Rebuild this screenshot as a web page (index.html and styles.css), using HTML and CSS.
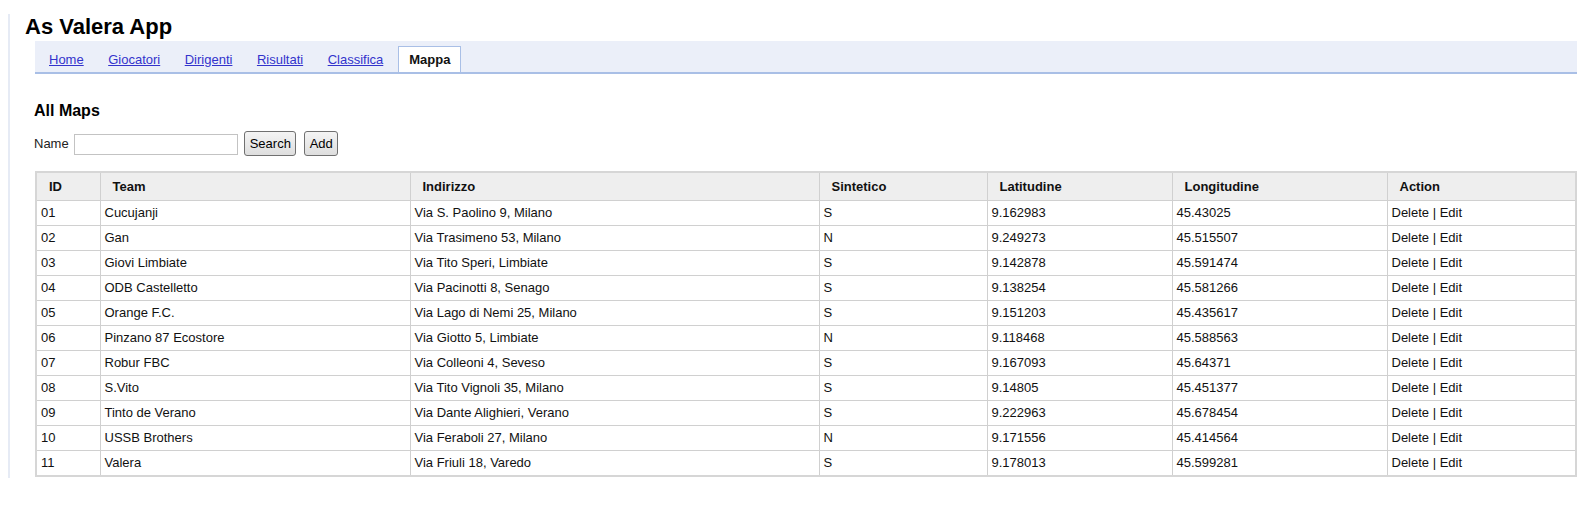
FILE: index.html
```html
<!DOCTYPE html>
<html lang="it">
<head>
<meta charset="utf-8">
<title>As Valera App</title>
<link rel="stylesheet" href="styles.css">
</head>
<body>
<div class="page">
  <h1 class="app-title">As Valera App</h1>
  <div class="content">
    <ul class="tabs">
      <li class="tab"><a href="#">Home</a></li>
      <li class="tab"><a href="#">Giocatori</a></li>
      <li class="tab"><a href="#">Dirigenti</a></li>
      <li class="tab"><a href="#">Risultati</a></li>
      <li class="tab"><a href="#">Classifica</a></li>
      <li class="tab active"><span>Mappa</span></li>
    </ul>
    <h2 class="section-title">All Maps</h2>
    <form class="search-form">
      <label class="search-label" for="name">Name</label>
      <input class="search-input" id="name" type="text">
      <button class="btn btn-search" type="button">Search</button>
      <button class="btn btn-add" type="button">Add</button>
    </form>
    <table class="maps">
      <colgroup>
        <col class="c-id"><col class="c-team"><col class="c-addr"><col class="c-sint"><col class="c-lat"><col class="c-lon"><col class="c-act">
      </colgroup>
      <thead>
        <tr><th>ID</th><th>Team</th><th>Indirizzo</th><th>Sintetico</th><th>Latitudine</th><th>Longitudine</th><th>Action</th></tr>
      </thead>
      <tbody>
        <tr><td>01</td><td>Cucujanji</td><td>Via S. Paolino 9, Milano</td><td>S</td><td>9.162983</td><td>45.43025</td><td>Delete | Edit</td></tr>
        <tr><td>02</td><td>Gan</td><td>Via Trasimeno 53, Milano</td><td>N</td><td>9.249273</td><td>45.515507</td><td>Delete | Edit</td></tr>
        <tr><td>03</td><td>Giovi Limbiate</td><td>Via Tito Speri, Limbiate</td><td>S</td><td>9.142878</td><td>45.591474</td><td>Delete | Edit</td></tr>
        <tr><td>04</td><td>ODB Castelletto</td><td>Via Pacinotti 8, Senago</td><td>S</td><td>9.138254</td><td>45.581266</td><td>Delete | Edit</td></tr>
        <tr><td>05</td><td>Orange F.C.</td><td>Via Lago di Nemi 25, Milano</td><td>S</td><td>9.151203</td><td>45.435617</td><td>Delete | Edit</td></tr>
        <tr><td>06</td><td>Pinzano 87 Ecostore</td><td>Via Giotto 5, Limbiate</td><td>N</td><td>9.118468</td><td>45.588563</td><td>Delete | Edit</td></tr>
        <tr><td>07</td><td>Robur FBC</td><td>Via Colleoni 4, Seveso</td><td>S</td><td>9.167093</td><td>45.64371</td><td>Delete | Edit</td></tr>
        <tr><td>08</td><td>S.Vito</td><td>Via Tito Vignoli 35, Milano</td><td>S</td><td>9.14805</td><td>45.451377</td><td>Delete | Edit</td></tr>
        <tr><td>09</td><td>Tinto de Verano</td><td>Via Dante Alighieri, Verano</td><td>S</td><td>9.222963</td><td>45.678454</td><td>Delete | Edit</td></tr>
        <tr><td>10</td><td>USSB Brothers</td><td>Via Feraboli 27, Milano</td><td>N</td><td>9.171556</td><td>45.414564</td><td>Delete | Edit</td></tr>
        <tr><td>11</td><td>Valera</td><td>Via Friuli 18, Varedo</td><td>S</td><td>9.178013</td><td>45.599281</td><td>Delete | Edit</td></tr>
      </tbody>
    </table>
  </div>
</div>
</body>
</html>
```
FILE: styles.css
```css
html, body {
  background: #ffffff;
}
body {
  margin: 0 8px;
  font-family: "Liberation Sans", Arial, sans-serif;
  font-size: 13px;
  color: #222222;
}
.page {
  border-left: 2px solid #e6ebf5;
  padding-left: 15px;
  padding-bottom: 1px;
}
.app-title {
  margin: 14px 0 1px 0;
  font-size: 22px;
  line-height: 26px;
  font-weight: bold;
  color: #000000;
}
.content {
  margin-left: 10px;
}
.tabs {
  list-style: none;
  margin: 0;
  padding: 0 0 0 3px;
  height: 31px;
  display: flex;
  align-items: flex-end;
  background: #ebeff9;
  border-bottom: 2px solid #a9bfe6;
}
.tab {
  border: 1px solid transparent;
  border-bottom: 0;
  padding: 0 10px;
  margin-right: 2.5px;
  line-height: 25px;
  font-size: 13px;
}
.tab a {
  color: #3333cc;
  text-decoration: underline;
}
.tab.active {
  margin-left: 1.5px;
  background: #ffffff;
  border-color: #a9bfe6;
  font-weight: bold;
  color: #111111;
}
.section-title {
  margin: 27px 0 0 -1px;
  font-size: 16px;
  line-height: 19px;
  font-weight: bold;
  color: #000000;
}
.search-form {
  margin: 11px 0 0 -1px;
  display: flex;
  align-items: center;
  height: 25px;
}
.search-label {
  font-size: 13px;
  margin-right: 5px;
}
.search-input {
  width: 164px;
  height: 21px;
  box-sizing: border-box;
  border: 1px solid #c3c3c3;
  margin: 2px 6px 0 0;
  padding: 0 3px;
  font-size: 13px;
}
.btn {
  height: 25px;
  box-sizing: border-box;
  border: 1px solid #707070;
  border-radius: 3px;
  background: linear-gradient(#f4f4f4, #dedede);
  font-family: "Liberation Sans", Arial, sans-serif;
  font-size: 13px;
  color: #000000;
  padding: 0 5px;
}
.btn-search {
  width: 52px;
  margin-right: 8px;
}
.btn-add {
  width: 34px;
}
.maps {
  margin-top: 15px;
  width: 100%;
  border-collapse: collapse;
  table-layout: fixed;
  border: 2px solid #d6d6d6;
}
.c-id { width: 64px; }
.c-team { width: 310px; }
.c-addr { width: 409px; }
.c-sint { width: 168px; }
.c-lat { width: 185px; }
.c-lon { width: 215px; }
.c-act { width: auto; }
.maps th {
  background: #eeeeee;
  border: 1px solid #d0d0d0;
  text-align: left;
  font-weight: bold;
  color: #111111;
  padding: 0 12px;
  height: 27px;
  line-height: 16px;
}
.maps td {
  border: 1px solid #d0d0d0;
  padding: 0 4px;
  height: 24px;
  line-height: 16px;
  color: #111111;
  white-space: nowrap;
}
```
